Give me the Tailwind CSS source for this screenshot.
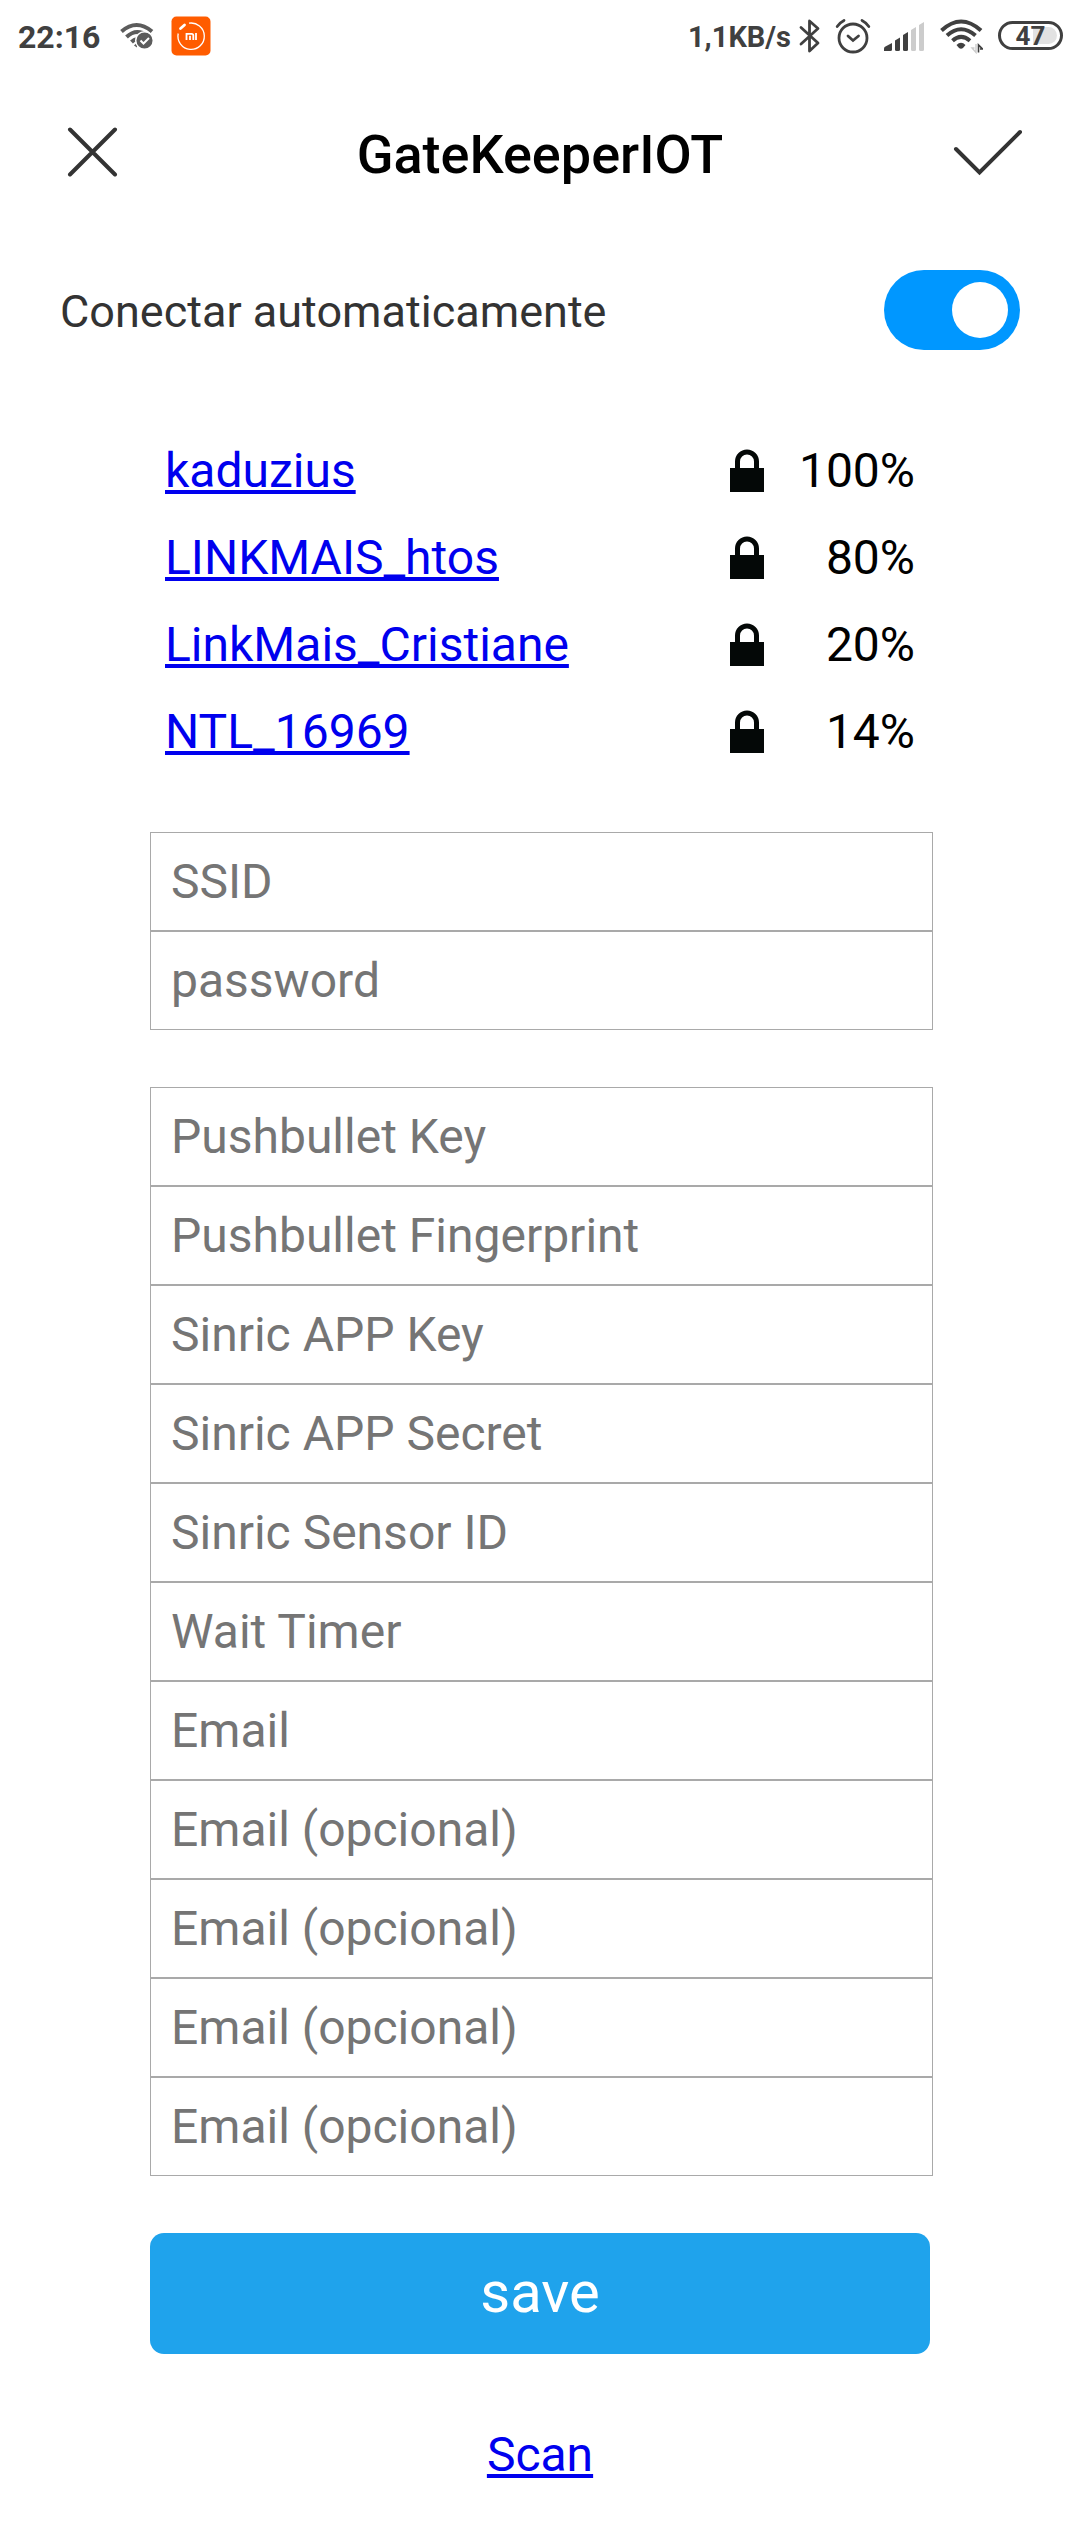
<!DOCTYPE html>
<html lang="pt-BR">
<head>
<meta charset="utf-8">
<meta name="viewport" content="width=device-width, initial-scale=1">
<title>GateKeeperIOT</title>
<script src="https://cdn.jsdelivr.net/npm/@tailwindcss/browser@4"></script>
</head>
<body class="min-h-screen bg-white font-[Roboto,sans-serif] text-black">

<!-- Status bar -->
<div class="flex h-[71px] items-center justify-between pr-[17px] pl-[18px] text-[#404040]">
  <div class="flex items-center">
    <span class="pt-[2px] text-[32px] leading-[40px] font-bold">22:16</span>
    <svg class="ml-[20px]" width="34" height="28" viewBox="0 0 34 28" fill="none" stroke="#5c5c5c" stroke-width="4" aria-hidden="true">
      <path d="M1.5 9.5Q16.500 -3.500 32 9.500"/>
      <path d="M6.500 15Q16.500 5.500 28 14"/>
      <path d="M11.500 20Q14 17.500 17 17"/>
      <path d="M14 23.500l3-3v5z" fill="#5c5c5c" stroke="none"/>
      <circle cx="24.500" cy="18.500" r="8.800" fill="#5c5c5c" stroke="#fff" stroke-width="1.500"/>
      <path d="M20.500 18.500l3 3 5.500-5.500" stroke="#fff" stroke-width="2"/>
    </svg>
    <svg class="ml-[17px]" width="40" height="40" viewBox="0 0 40 40" fill="none" stroke="#fff" aria-hidden="true">
      <rect width="39" height="39" x=".5" y=".5" rx="5" fill="#ff5c00" stroke="none"/>
      <path d="M18 7.200A13.200 13.200 0 1 1 7.200 17.500" stroke-width="1.300"/>
      <path d="M9.500 12.500l4-3.500" stroke-width="2.800" stroke-linecap="round"/>
      <path d="M15.500 24v-6.200h5.200q1.600 0 1.600 1.600V24M19 19.800V24M25 17v7" stroke-width="1.800"/>
    </svg>
  </div>
  <div class="flex items-center">
    <span class="pt-[2px] text-[29px] leading-[40px] font-bold">1,1KB/s</span>
    <svg class="ml-[8px]" width="22" height="36" viewBox="0 0 22 36" fill="none" stroke="#404040" stroke-width="2.800" stroke-linejoin="round" stroke-linecap="round" aria-hidden="true">
      <path d="M2 9.500L19 25l-8.500 8V3L19 10.500 2 26"/>
    </svg>
    <svg class="ml-[14px]" width="36" height="36" viewBox="0 0 36 36" fill="none" stroke="#404040" stroke-width="2.800" stroke-linecap="round" aria-hidden="true">
      <circle cx="18" cy="20" r="14"/>
      <path d="M13 18l5 4.500 5.500-4.500"/>
      <path d="M2.200 8.500Q5 4.500 9 2.500M33.800 8.500Q31 4.500 27 2.500"/>
    </svg>
    <svg class="ml-[13px]" width="41" height="30" viewBox="0 0 41 30" fill="#404040" aria-hidden="true">
      <path d="M0 30v-2.500q0-1.200 1-1.800L8 22v6.500Q8 30 6.500 30z"/>
      <path d="M11 19.500l5-3v12q0 1.500-1.500 1.500h-2Q11 30 11 28.500z"/>
      <path d="M19 14l5-3v17.500q0 1.500-1.500 1.500h-2Q19 30 19 28.500z"/>
      <path d="M27 9l5-3v22.500q0 1.500-1.500 1.500h-2Q27 30 27 28.500zM35 4l5-3v27.500q0 1.500-1.500 1.500h-2Q35 30 35 28.500z" fill="#ccc"/>
    </svg>
    <svg class="ml-[15px]" width="43" height="36" viewBox="0 0 43 36" fill="none" stroke="#404040" stroke-width="4" aria-hidden="true">
      <path d="M1.500 12.500Q21 -5.500 41 12.500"/>
      <path d="M7 17.500Q21 5 35.500 17.500"/>
      <path d="M12.500 22.800Q21 15 30 22.800"/>
      <path d="M16.500 27Q21 22.500 25.500 27L23 30q-2 1.500-4 0z" fill="#404040" stroke="none"/>
      <path d="M38.500 34.500V27l4 4h-2.500" stroke-width="1.600"/>
      <path d="M36 26v8.500l-4-4.500h2.500" stroke="#ccc" stroke-width="1.400"/>
    </svg>
    <div class="relative ml-[15px] flex h-[29px] w-[65px] items-center justify-center rounded-full border-[3px] border-[#404040]">
      <span class="absolute inset-y-[3px] right-[3px] w-[24px] rounded-r-full bg-[#e2e2e2]"></span>
      <span class="relative text-[26px] leading-[24px] font-bold">47</span>
    </div>
  </div>
</div>

<!-- Title bar -->
<header class="flex h-[164px] items-center justify-between px-[56px]">
  <button type="button" aria-label="Fechar" class="flex h-[72px] w-[72px] items-center justify-center">
    <svg width="52" height="52" viewBox="0 0 52 52" fill="none" stroke="#333" stroke-width="4" stroke-linecap="round"><path d="M4 2.500l45 45M49 2.500l-45 45"/></svg>
  </button>
  <h1 class="pt-[3px] text-[54px] leading-[66px] font-medium">GateKeeperIOT</h1>
  <button type="button" aria-label="Confirmar" class="flex h-[72px] w-[72px] items-center justify-center">
    <svg width="72" height="48" viewBox="0 0 72 48" fill="none" stroke="#333" stroke-width="4" stroke-linecap="round"><path d="M4 20l23.500 23.500L68 3"/></svg>
  </button>
</header>

<!-- Auto-connect switch -->
<div class="flex h-[150px] items-center justify-between px-[60px]">
  <label for="auto" class="pt-[3px] text-[45px] leading-[54px] text-[#333]">Conectar automaticamente</label>
  <input id="auto" type="checkbox" role="switch" checked class="flex h-[80px] w-[136px] appearance-none items-center rounded-full bg-gray-300 px-[12px] before:block before:h-[56px] before:w-[56px] before:rounded-full before:bg-white checked:justify-end checked:bg-[#0097ff]">
</div>

<!-- Captive portal page -->
<main class="px-[150px] pt-[42px] pb-[48px] text-[48px] leading-[57px]">
  <ul>
    <li class="flex items-center p-[15px]">
      <a href="#p" class="text-[#0000ee] underline decoration-4 underline-offset-[3px] [text-decoration-skip-ink:none]">kaduzius</a>
      <svg class="mb-[2px] ml-auto shrink-0" width="34" height="44" viewBox="0 0 34 44" role="img" aria-label="Rede protegida"><path d="M7.500 22V13.500a9.500 9.500 0 0 1 19 0V22" fill="none" stroke="#040807" stroke-width="5"/><path d="M0 20h34v24H0z" fill="#040807"/></svg>
      <span class="w-[151px] text-right">100%</span>
    </li>
    <li class="flex items-center p-[15px]">
      <a href="#p" class="text-[#0000ee] underline decoration-4 underline-offset-[3px] [text-decoration-skip-ink:none]">LINKMAIS_htos</a>
      <svg class="mb-[2px] ml-auto shrink-0" width="34" height="44" viewBox="0 0 34 44" role="img" aria-label="Rede protegida"><path d="M7.500 22V13.500a9.500 9.500 0 0 1 19 0V22" fill="none" stroke="#040807" stroke-width="5"/><path d="M0 20h34v24H0z" fill="#040807"/></svg>
      <span class="w-[151px] text-right">80%</span>
    </li>
    <li class="flex items-center p-[15px]">
      <a href="#p" class="text-[#0000ee] underline decoration-4 underline-offset-[3px] [text-decoration-skip-ink:none]">LinkMais_Cristiane</a>
      <svg class="mb-[2px] ml-auto shrink-0" width="34" height="44" viewBox="0 0 34 44" role="img" aria-label="Rede protegida"><path d="M7.500 22V13.500a9.500 9.500 0 0 1 19 0V22" fill="none" stroke="#040807" stroke-width="5"/><path d="M0 20h34v24H0z" fill="#040807"/></svg>
      <span class="w-[151px] text-right">20%</span>
    </li>
    <li class="flex items-center p-[15px]">
      <a href="#p" class="text-[#0000ee] underline decoration-4 underline-offset-[3px] [text-decoration-skip-ink:none]">NTL_16969</a>
      <svg class="mb-[2px] ml-auto shrink-0" width="34" height="44" viewBox="0 0 34 44" role="img" aria-label="Rede protegida"><path d="M7.500 22V13.500a9.500 9.500 0 0 1 19 0V22" fill="none" stroke="#040807" stroke-width="5"/><path d="M0 20h34v24H0z" fill="#040807"/></svg>
      <span class="w-[151px] text-right">14%</span>
    </li>
  </ul>

  <form class="mt-[57px] flex flex-col gap-[57px]">
    <div class="flex w-[calc(100%+3px)] flex-col">
      <input type="text" aria-label="SSID" placeholder="SSID" class="h-[99px] border border-[#a9a9a9] px-[20px] placeholder:text-[#757575]">
      <input type="password" aria-label="password" placeholder="password" class="h-[99px] border border-[#a9a9a9] px-[20px] placeholder:text-[#757575]">
    </div>
    <div class="flex w-[calc(100%+3px)] flex-col">
      <input type="text" aria-label="Pushbullet Key" placeholder="Pushbullet Key" class="h-[99px] border border-[#a9a9a9] px-[20px] placeholder:text-[#757575]">
      <input type="text" aria-label="Pushbullet Fingerprint" placeholder="Pushbullet Fingerprint" class="h-[99px] border border-[#a9a9a9] px-[20px] placeholder:text-[#757575]">
      <input type="text" aria-label="Sinric APP Key" placeholder="Sinric APP Key" class="h-[99px] border border-[#a9a9a9] px-[20px] placeholder:text-[#757575]">
      <input type="text" aria-label="Sinric APP Secret" placeholder="Sinric APP Secret" class="h-[99px] border border-[#a9a9a9] px-[20px] placeholder:text-[#757575]">
      <input type="text" aria-label="Sinric Sensor ID" placeholder="Sinric Sensor ID" class="h-[99px] border border-[#a9a9a9] px-[20px] placeholder:text-[#757575]">
      <input type="text" aria-label="Wait Timer" placeholder="Wait Timer" class="h-[99px] border border-[#a9a9a9] px-[20px] placeholder:text-[#757575]">
      <input type="email" aria-label="Email" placeholder="Email" class="h-[99px] border border-[#a9a9a9] px-[20px] placeholder:text-[#757575]">
      <input type="email" aria-label="Email (opcional)" placeholder="Email (opcional)" class="h-[99px] border border-[#a9a9a9] px-[20px] placeholder:text-[#757575]">
      <input type="email" aria-label="Email (opcional)" placeholder="Email (opcional)" class="h-[99px] border border-[#a9a9a9] px-[20px] placeholder:text-[#757575]">
      <input type="email" aria-label="Email (opcional)" placeholder="Email (opcional)" class="h-[99px] border border-[#a9a9a9] px-[20px] placeholder:text-[#757575]">
      <input type="email" aria-label="Email (opcional)" placeholder="Email (opcional)" class="h-[99px] border border-[#a9a9a9] px-[20px] placeholder:text-[#757575]">
    </div>
    <button type="submit" class="h-[121px] w-full rounded-[14px] bg-[#1fa3ec] pb-[3px] text-[58px] text-white">save</button>
  </form>

  <p class="mt-[72px] text-center">
    <a href="#scan" class="text-[#0000ee] underline decoration-4 underline-offset-[3px] [text-decoration-skip-ink:none]">Scan</a>
  </p>
</main>
</body>
</html>
